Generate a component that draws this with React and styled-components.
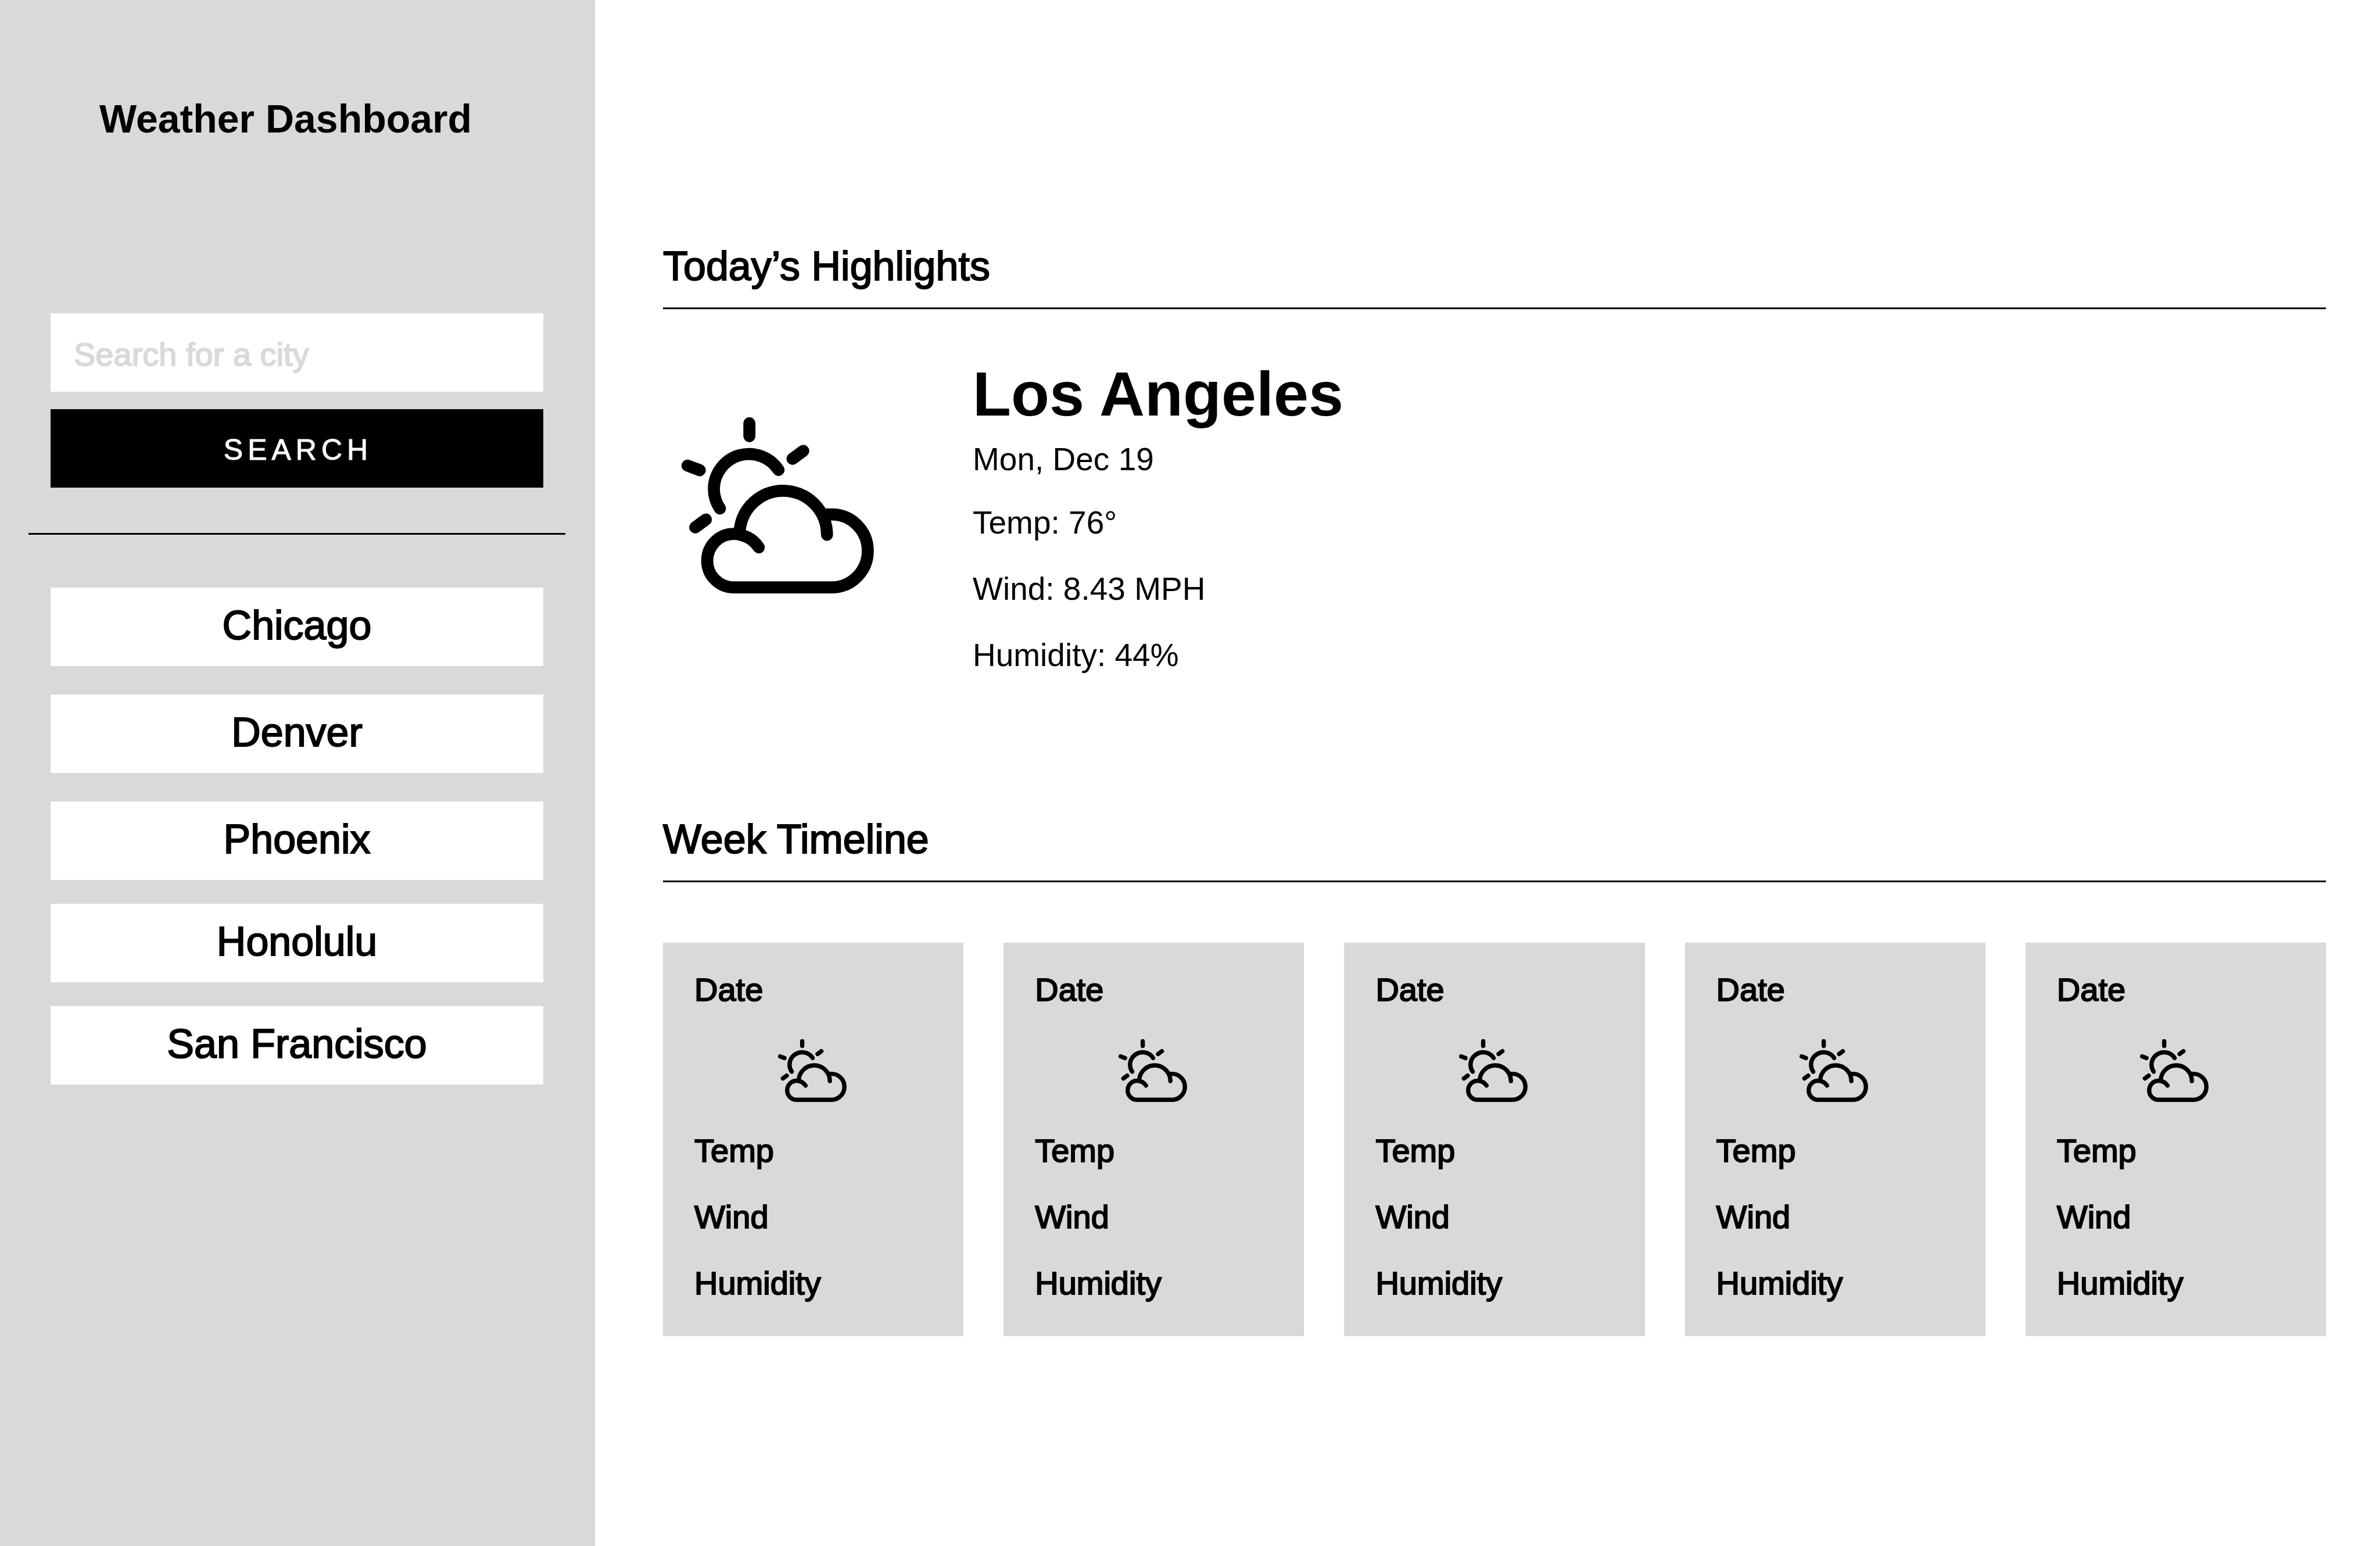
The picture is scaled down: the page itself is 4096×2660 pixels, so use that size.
import React from "react";
import styled, { createGlobalStyle } from "styled-components";

const GlobalStyle = createGlobalStyle`
  *, *::before, *::after { box-sizing: border-box; }
  body {
    margin: 0;
    background: #ffffff;
    color: #000000;
    font-family: "Liberation Sans", Arial, Helvetica, sans-serif;
  }
  h1, h2, h3, p, ul { margin: 0; padding: 0; }
  ul { list-style: none; }
`;

const Page = styled.div`
  display: flex;
  min-height: 100vh;
`;

const Sidebar = styled.aside`
  flex: 0 0 25%;
  display: flex;
  flex-direction: column;
  padding: 164px 51px 80px 49px;
  background: #d9d9d9;
`;

const Title = styled.h1`
  padding-left: 122px;
  font-size: 68px;
  line-height: 80px;
  font-weight: 700;
  white-space: nowrap;
`;

const SearchForm = styled.form`
  display: flex;
  flex-direction: column;
  gap: 30px;
  margin-top: 295px;
  padding: 0 38px;
`;

const SearchInput = styled.input`
  width: 100%;
  height: 135px;
  padding: 6px 40px 0;
  border: 0;
  border-radius: 0;
  background: #ffffff;
  color: #000000;
  font-family: inherit;
  font-size: 56px;
  -webkit-text-stroke: 2px currentColor;
  &::placeholder { color: #d9d9d9; opacity: 1; }
`;

const SearchButton = styled.button`
  height: 135px;
  padding: 4px 0 0 4px;
  border: 0;
  background: #000000;
  color: #ffffff;
  font-family: inherit;
  font-size: 50px;
  letter-spacing: 8px;
  -webkit-text-stroke: 1px currentColor;
  cursor: pointer;
`;

const Divider = styled.hr`
  width: 100%;
  height: 3px;
  margin: 78px 0 91px;
  border: 0;
  background: #000000;
`;

const CityList = styled.ul`
  padding: 0 38px;
`;

const CityItem = styled.li`
  margin-top: ${(p) => (p.$tight ? 41 : 49)}px;
  &:first-child { margin-top: 0; }
`;

const CityButton = styled.button`
  display: block;
  width: 100%;
  height: 135px;
  padding: 0 0 6px;
  border: 0;
  background: #ffffff;
  color: #000000;
  font-family: inherit;
  font-size: 70px;
  -webkit-text-stroke: 2px currentColor;
  cursor: pointer;
`;

const Main = styled.main`
  flex: 1;
  min-width: 0;
  padding: 418px 93px 80px 117px;
`;

const SectionTitle = styled.h2`
  padding-bottom: 31px;
  border-bottom: 3px solid #000000;
  font-size: 70px;
  line-height: 80px;
  font-weight: 400;
  -webkit-text-stroke: 2px currentColor;
`;

const Today = styled.div`
  display: flex;
  align-items: flex-start;
  gap: 170px;
  padding: 86px 32px 245px;
`;

const TodayIcon = styled.div`
  flex: none;
  width: 331px;
  padding-top: 100px;
`;

const CityName = styled.h3`
  margin-bottom: 20px;
  font-size: 108px;
  line-height: 120px;
  font-weight: 700;
`;

const TodayDate = styled.p`
  font-size: 55px;
  line-height: 64px;
`;

const Readings = styled.ul`
  display: flex;
  flex-direction: column;
  gap: 50px;
  margin-top: 45px;
  font-size: 55px;
  line-height: 64px;
`;

const Week = styled.ul`
  display: grid;
  grid-template-columns: repeat(5, 1fr);
  gap: 69px;
  margin-top: 104px;
`;

const DayCard = styled.li`
  padding: 49px 58px 59px 54px;
  background: #d9d9d9;
  font-size: 56px;
  line-height: 64px;
  -webkit-text-stroke: 2px currentColor;
`;

const DayIcon = styled.div`
  width: 118px;
  margin: 53px auto 52px;
`;

const DayReadings = styled.ul`
  display: flex;
  flex-direction: column;
  gap: 50px;
`;

const Drawing = styled.svg`
  display: block;
  width: 100%;
  height: auto;
  fill: none;
  stroke: #000000;
  stroke-width: 69;
  stroke-linecap: round;
  stroke-linejoin: round;
`;

function PartlyCloudy() {
  return (
    <Drawing viewBox="147 134 1099 1006" role="img" aria-label="Partly cloudy">
      <path d="M534.5 168V242" />
      <path d="M842 326L781 371" />
      <path d="M181 410L251 436" />
      <path d="M286 718L225 763" />
      <path d="M701 435A201 201 0 0 0 331.5 543A201 201 0 0 0 366 655" />
      <path d="M479 783A249 251.5 0 0 1 727 553.5A251 251.5 0 0 1 978 805" />
      <path d="M588 877C557 831 504 800 444 800C361 800 293.5 869 293.5 953C293.5 1038 361 1105.5 446 1105.5H1006A206 208.5 0 0 0 1211 897A205 208.5 0 0 0 1006 689H975" />
    </Drawing>
  );
}

const cities = [
  { name: "Chicago" },
  { name: "Denver" },
  { name: "Phoenix" },
  { name: "Honolulu", tight: true },
  { name: "San Francisco", tight: true },
];

const today = {
  city: "Los Angeles",
  date: "Mon, Dec 19",
  readings: ["Temp: 76°", "Wind: 8.43 MPH", "Humidity: 44%"],
};

const days = [1, 2, 3, 4, 5];
const fields = ["Temp", "Wind", "Humidity"];

export default function App() {
  return (
    <>
      <GlobalStyle />
      <Page>
        <Sidebar>
          <Title>Weather Dashboard</Title>
          <SearchForm onSubmit={(e) => e.preventDefault()}>
            <SearchInput type="text" name="city" aria-label="Search for a city" placeholder="Search for a city" />
            <SearchButton type="submit">SEARCH</SearchButton>
          </SearchForm>
          <Divider />
          <CityList>
            {cities.map((c) => (
              <CityItem key={c.name} $tight={c.tight}>
                <CityButton type="button">{c.name}</CityButton>
              </CityItem>
            ))}
          </CityList>
        </Sidebar>
        <Main>
          <section>
            <SectionTitle>Today’s Highlights</SectionTitle>
            <Today>
              <TodayIcon>
                <PartlyCloudy />
              </TodayIcon>
              <div>
                <CityName>{today.city}</CityName>
                <TodayDate>{today.date}</TodayDate>
                <Readings>
                  {today.readings.map((r) => (
                    <li key={r}>{r}</li>
                  ))}
                </Readings>
              </div>
            </Today>
          </section>
          <section>
            <SectionTitle>Week Timeline</SectionTitle>
            <Week>
              {days.map((d) => (
                <DayCard key={d}>
                  <p>Date</p>
                  <DayIcon>
                    <PartlyCloudy />
                  </DayIcon>
                  <DayReadings>
                    {fields.map((f) => (
                      <li key={f}>{f}</li>
                    ))}
                  </DayReadings>
                </DayCard>
              ))}
            </Week>
          </section>
        </Main>
      </Page>
    </>
  );
}
